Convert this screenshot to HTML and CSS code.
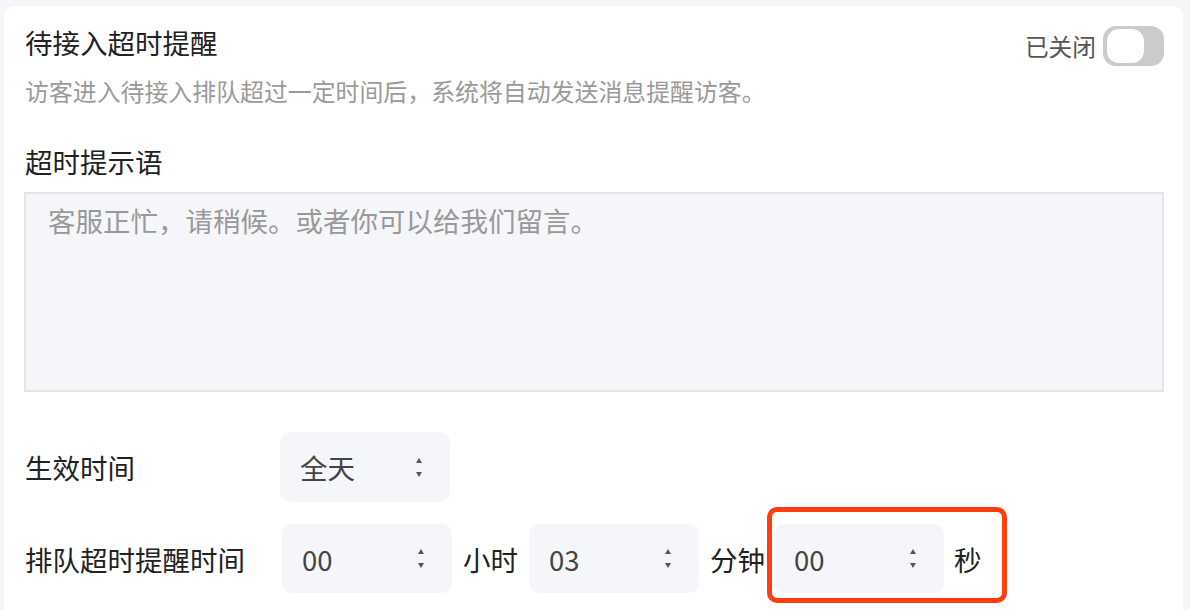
FILE: index.html
```html
<!DOCTYPE html>
<html lang="zh-CN">
<head>
<meta charset="utf-8">
<link rel="stylesheet" href="styles.css">
</head>
<body>
<div class="card">
  <div class="head">
    <div class="title">待接入超时提醒</div>
    <div class="status">
      <span class="status-text">已关闭</span>
      <span class="toggle"><span class="knob"></span></span>
    </div>
  </div>
  <div class="desc">访客进入待接入排队超过一定时间后，系统将自动发送消息提醒访客。</div>
  <div class="label">超时提示语</div>
  <textarea class="msg" placeholder="客服正忙，请稍候。或者你可以给我们留言。"></textarea>
  <div class="row row-first">
    <div class="row-label">生效时间</div>
    <div class="select"><span class="val">全天</span><span class="arrows"><i class="up"></i><i class="down"></i></span></div>
  </div>
  <div class="row row-second">
    <div class="row-label wide">排队超时提醒时间</div>
    <div class="select"><span class="val">00</span><span class="arrows"><i class="up"></i><i class="down"></i></span></div>
    <span class="unit">小时</span>
    <div class="select"><span class="val">03</span><span class="arrows"><i class="up"></i><i class="down"></i></span></div>
    <span class="unit">分钟</span>
    <div class="marked">
      <div class="select"><span class="val">00</span><span class="arrows"><i class="up"></i><i class="down"></i></span></div>
      <span class="unit">秒</span>
    </div>
  </div>
</div>
</body>
</html>
```
FILE: styles.css
```css
* { box-sizing: border-box; }
html, body { margin: 0; height: 100%; }
body {
  background: #f5f6fa;
  padding: 6px 7px 0 4px;
  font-family: "Noto Sans CJK SC", "Noto Sans", sans-serif;
  color: #222;
  overflow: hidden;
}
.card {
  background: #fff;
  border-radius: 10px;
  padding: 10px 19px 40px 20px;
  min-height: 700px;
}
.head {
  display: flex;
  justify-content: space-between;
  align-items: flex-start;
  height: 46px;
}
.title {
  font-size: 27.5px;
  line-height: 40px;
  margin-top: 6px;
  padding-left: 1px;
}
.status {
  display: flex;
  align-items: center;
  margin-top: 10px;
}
.status-text {
  font-size: 23.7px;
  line-height: 40px;
  color: #555;
  margin-right: 7px;
}
.toggle {
  width: 61px;
  height: 40px;
  border-radius: 13px;
  background: #cbcbcb;
  padding: 3px 4px;
  display: flex;
}
.knob {
  width: 37px;
  height: 34px;
  border-radius: 12px;
  background: #fff;
}
.desc {
  font-size: 23.9px;
  line-height: 34px;
  color: #9a9a9a;
  margin-top: 12px;
  padding-left: 1px;
}
.label {
  font-size: 27.5px;
  line-height: 40px;
  margin-top: 33px;
  padding-left: 1px;
}
.msg {
  display: block;
  width: 100%;
  height: 200px;
  margin-top: 11px;
  border: 2px solid #e4e5e8;
  background: #f5f6fa;
  padding: 6px 22px;
  font-family: inherit;
  font-size: 27.5px;
  line-height: 40px;
  resize: none;
  outline: none;
  color: #222;
}
.msg::placeholder { color: #999; }
.row {
  display: flex;
  align-items: center;
}
.row-first { margin-top: 40px; }
.row-second { margin-top: 22px; }
.row-label {
  width: 256px;
  font-size: 27.5px;
  line-height: 40px;
  padding-left: 1px;
}
.row-label.wide { width: 258px; }
.select {
  width: 170px;
  height: 70px;
  border-radius: 10px;
  background: #f5f6fa;
  display: flex;
  align-items: center;
  justify-content: space-between;
  padding: 0 27px 0 20px;
}
.row-second .select { height: 69px; }
.val {
  font-size: 27.5px;
  line-height: 40px;
  color: #444;
}
.arrows {
  display: flex;
  flex-direction: column;
  gap: 9px;
  width: 7px;
}
.arrows i {
  display: block;
  width: 0;
  height: 0;
  border-left: 3.5px solid transparent;
  border-right: 3.5px solid transparent;
}
.arrows .up { border-bottom: 5px solid #555; }
.arrows .down { border-top: 5px solid #555; }
.unit {
  font-size: 27.5px;
  line-height: 40px;
  margin: 0 11px;
}
.marked {
  display: flex;
  align-items: center;
  position: relative;
  margin-left: -2px;
}
.marked .unit { margin-right: 0; margin-left: 10px; }
.marked::after {
  content: "";
  position: absolute;
  left: -7px;
  top: -17px;
  right: -25px;
  bottom: -10px;
  border: 5px solid #ff3d0f;
  border-radius: 10px;
  pointer-events: none;
}
```
